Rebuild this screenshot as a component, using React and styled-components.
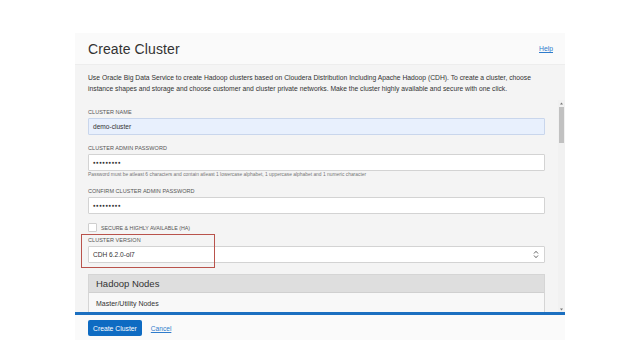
import React from "react";
import styled, { createGlobalStyle } from "styled-components";

const GlobalStyle = createGlobalStyle`
  html, body { margin: 0; padding: 0; background: #ffffff; }
  body { font-family: "Liberation Sans", Arial, sans-serif; color: #333; }
  * { box-sizing: border-box; }
`;

const Page = styled.div`
  width: 640px;
  height: 360px;
  padding: 33px 75px 0 75px;
`;

const Panel = styled.div`
  width: 490px;
  display: flex;
  flex-direction: column;
`;

const Header = styled.div`
  height: 32px;
  background: #fafafa;
  border-bottom: 1px solid #ededed;
  display: flex;
  align-items: center;
  justify-content: space-between;
  padding: 0 12px 0 13px;
`;

const Title = styled.h1`
  margin: 0;
  font-size: 14px;
  font-weight: 400;
  color: #333;
  letter-spacing: 0.1px;
`;

const Link = styled.a`
  font-size: ${(p) => p.$size || 6.8}px;
  color: #2f7ccc;
  text-decoration: underline;
  cursor: pointer;
`;

const Body = styled.div`
  background: #f4f4f4;
  display: flex;
  flex-direction: column;
`;

const Intro = styled.p`
  margin: 0;
  padding: 7px 16px 6px 13px;
  font-size: 6.75px;
  line-height: 11px;
  color: #333;
`;

const ScrollArea = styled.div`
  height: 212px;
  display: flex;
  overflow: hidden;
`;

const Form = styled.div`
  flex: 1;
  padding: 9px 13px 0 13px;
  display: flex;
  flex-direction: column;
`;

const Field = styled.div`
  position: relative;
  display: flex;
  flex-direction: column;
  margin-top: ${(p) => p.$mt || 0}px;
`;

const Label = styled.label`
  font-size: 5.5px;
  line-height: 7px;
  color: #555;
  text-transform: uppercase;
  letter-spacing: 0.05px;
  margin-bottom: 2px;
`;

const Input = styled.div`
  height: 17px;
  border: 1px solid ${(p) => (p.$filled ? "#c9d6ec" : "#d3d3d3")};
  background: ${(p) => (p.$filled ? "#e8f0fd" : "#ffffff")};
  border-radius: 1px;
  display: flex;
  align-items: center;
  justify-content: space-between;
  padding: 0 5px 0 4px;
  font-size: 6.6px;
  color: #333;
`;

const Dots = styled.span`
  font-size: 4.6px;
  letter-spacing: 0.35px;
  color: #333;
`;

const Hint = styled.div`
  font-size: 4.9px;
  line-height: 6px;
  color: #777;
  margin-top: 1px;
`;

const CheckRow = styled.div`
  display: flex;
  align-items: center;
  gap: 4px;
  margin-top: 9px;
`;

const CheckBox = styled.span`
  width: 9px;
  height: 9px;
  background: #fff;
  border: 1px solid #cfcfcf;
  border-radius: 1px;
`;

const CheckLabel = styled.span`
  font-size: 5.3px;
  color: #555;
  text-transform: uppercase;
`;

const Highlight = styled.div`
  position: absolute;
  left: -7px;
  top: -3px;
  width: 134px;
  height: 34px;
  border: 1.5px solid #b9534c;
  pointer-events: none;
`;

const NodesBox = styled.div`
  margin-top: 11px;
  border: 1px solid #d5d5d5;
  display: flex;
  flex-direction: column;
`;

const NodesHeader = styled.div`
  height: 18px;
  background: #dedede;
  border-bottom: 1px solid #d0d0d0;
  display: flex;
  align-items: center;
  padding-left: 7px;
  font-size: 9.5px;
  color: #333;
`;

const NodesRow = styled.div`
  height: 20px;
  background: #f8f8f8;
  display: flex;
  align-items: center;
  padding-left: 7px;
  font-size: 7px;
  color: #333;
`;

const Scrollbar = styled.div`
  width: 7px;
  background: #f1f1f1;
  display: flex;
  flex-direction: column;
  align-items: center;
  padding-top: 1px;
`;

const Track = styled.div`
  flex: 1;
  width: 100%;
  display: flex;
  flex-direction: column;
  align-items: center;
`;

const Thumb = styled.div`
  width: 5px;
  height: 36px;
  background: #c1c1c1;
  margin-top: 1px;
`;

const Footer = styled.div`
  height: 28px;
  border-top: 3px solid #1b6fc0;
  background: #fafafa;
  display: flex;
  align-items: center;
  gap: 9px;
  padding: 1px 13px 0 13px;
`;

const Button = styled.button`
  height: 16px;
  padding: 0 5px;
  background: #0e6bc2;
  border: none;
  border-radius: 2px;
  color: #fff;
  font-family: inherit;
  font-size: 6.8px;
  cursor: pointer;
`;

const Arrow = ({ up }) => (
  <svg width="5" height="5" viewBox="0 0 5 5">
    <path d={up ? "M1 3.5 L2.5 1.5 L4 3.5 Z" : "M1 1.5 L2.5 3.5 L4 1.5 Z"} fill="#777" />
  </svg>
);

const UpDown = () => (
  <svg width="6" height="9" viewBox="0 0 6 9">
    <path d="M1 3.5 L3 1.3 L5 3.5" fill="none" stroke="#555" strokeWidth="0.9" />
    <path d="M1 5.5 L3 7.7 L5 5.5" fill="none" stroke="#555" strokeWidth="0.9" />
  </svg>
);

export default function App() {
  return (
    <>
      <GlobalStyle />
      <Page>
        <Panel>
          <Header>
            <Title>Create Cluster</Title>
            <Link>Help</Link>
          </Header>
          <Body>
            <Intro>
              Use Oracle Big Data Service to create Hadoop clusters based on Cloudera Distribution Including Apache Hadoop (CDH). To create a cluster, choose instance shapes and storage and choose customer and cluster private networks. Make the cluster highly available and secure with one click.
            </Intro>
            <ScrollArea>
              <Form>
                <Field>
                  <Label>Cluster Name</Label>
                  <Input $filled>demo-cluster</Input>
                </Field>
                <Field $mt={10}>
                  <Label>Cluster Admin Password</Label>
                  <Input>
                    <Dots>●●●●●●●●●</Dots>
                  </Input>
                  <Hint>
                    Password must be atleast 6 characters and contain atleast 1 lowercase alphabet, 1 uppercase alphabet and 1 numeric character
                  </Hint>
                </Field>
                <Field $mt={10}>
                  <Label>Confirm Cluster Admin Password</Label>
                  <Input>
                    <Dots>●●●●●●●●●</Dots>
                  </Input>
                </Field>
                <CheckRow>
                  <CheckBox />
                  <CheckLabel>Secure &amp; Highly Available (HA)</CheckLabel>
                </CheckRow>
                <Field $mt={5}>
                  <Label>Cluster Version</Label>
                  <Input>
                    CDH 6.2.0-ol7
                    <UpDown />
                  </Input>
                  <Highlight />
                </Field>
                <NodesBox>
                  <NodesHeader>Hadoop Nodes</NodesHeader>
                  <NodesRow>Master/Utility Nodes</NodesRow>
                </NodesBox>
              </Form>
              <Scrollbar>
                <Arrow up />
                <Track>
                  <Thumb />
                </Track>
                <Arrow />
              </Scrollbar>
            </ScrollArea>
          </Body>
          <Footer>
            <Button>Create Cluster</Button>
            <Link $size={6.6}>Cancel</Link>
          </Footer>
        </Panel>
      </Page>
    </>
  );
}
